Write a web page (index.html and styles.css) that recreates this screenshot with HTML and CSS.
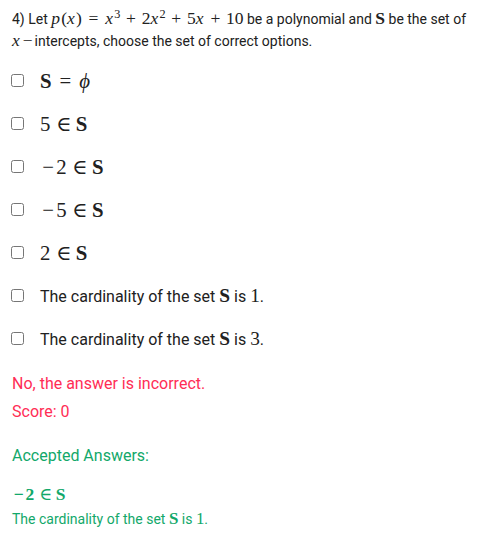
FILE: index.html
```html
<!DOCTYPE html>
<html>
<head>
<meta charset="utf-8">
<link rel="stylesheet" href="styles.css">
</head>
<body>
<div class="q">
  <p class="stem">4) Let <span class="m"><i>p</i>(<i>x</i>)<span class="op rel">=</span><i>x</i><sup>3</sup><span class="op bin">+</span>2<i>x</i><sup>2</sup><span class="op bin">+</span>5<i>x</i><span class="op bin">+</span>10</span> be a polynomial and <span class="m"><b>S</b></span> be the set of <span class="m"><i>x</i><span class="op">−</span></span>intercepts, choose the set of correct options.</p>
  <ul class="opts">
    <li class="opt"><input type="checkbox" class="cb"><span class="m big"><b>S</b><span class="op rel">=</span><i>ϕ</i></span></li>
    <li class="opt"><input type="checkbox" class="cb"><span class="m big">5<span class="op rel el">∈</span><b>S</b></span></li>
    <li class="opt"><input type="checkbox" class="cb"><span class="m big"><span class="op">−</span>2<span class="op rel el">∈</span><b>S</b></span></li>
    <li class="opt"><input type="checkbox" class="cb"><span class="m big"><span class="op">−</span>5<span class="op rel el">∈</span><b>S</b></span></li>
    <li class="opt"><input type="checkbox" class="cb"><span class="m big">2<span class="op rel el">∈</span><b>S</b></span></li>
    <li class="opt"><input type="checkbox" class="cb"><span>The cardinality of the set <span class="m"><b>S</b></span> is <span class="m">1</span>.</span></li>
    <li class="opt"><input type="checkbox" class="cb"><span>The cardinality of the set <span class="m"><b>S</b></span> is <span class="m">3</span>.</span></li>
  </ul>
  <p class="wrong">No, the answer is incorrect.</p>
  <p class="wrong">Score: 0</p>
  <p class="acc-h">Accepted Answers:</p>
  <div class="acc">
    <p class="acc-line"><span class="m acc-m"><b><span class="op">−</span>2</b><span class="op rel el">∈</span><b>S</b></span></p>
    <p class="acc-line">The cardinality of the set <span class="m"><b>S</b></span> is <span class="m">1</span>.</p>
  </div>
</div>
</body>
</html>
```
FILE: styles.css
```css
html, body { margin: 0; padding: 0; background: #fff; }
body { font-family: Roboto, "Noto Sans", sans-serif; color: #212121; }
.q { padding: 8px 12px; }
p { margin: 0; }
.stem { font-size: 14px; line-height: 21px; }
.m { font-family: "Liberation Serif", "DejaVu Serif", serif; font-size: 1.21em; white-space: nowrap; }
.stem .m { font-size: 1.25em; }
.m i { margin-right: 0.07em; }
.m b { font-weight: bold; }
.m sup { font-size: 0.7em; line-height: 0; vertical-align: 0.5em; }
.op { display: inline-block; width: 0.778em; text-align: center; }
.op.bin { margin: 0 0.222em; }
.op.rel { margin: 0 0.278em; }
.op.el { width: 0.667em; }
.opts { list-style: none; margin: 7px 0 0; padding: 0; }
.opt { height: 43px; display: flex; align-items: center; font-size: 16px; }
.cb { width: 13px; height: 13px; margin: 0 16px 0 -1px; flex: none; }
.big { font-size: 1.3em; }
.wrong { color: #ff2d55; font-size: 16px; line-height: 28px; }
.opts + .wrong { margin-top: 10px; }
.acc-h { color: #12a86a; font-size: 16px; line-height: 28px; margin-top: 16px; }
.acc { margin-top: 13px; color: #12a86a; }
.acc-line { font-size: 14px; line-height: 23px; }
.acc-m { font-size: 1.25em; }
```
